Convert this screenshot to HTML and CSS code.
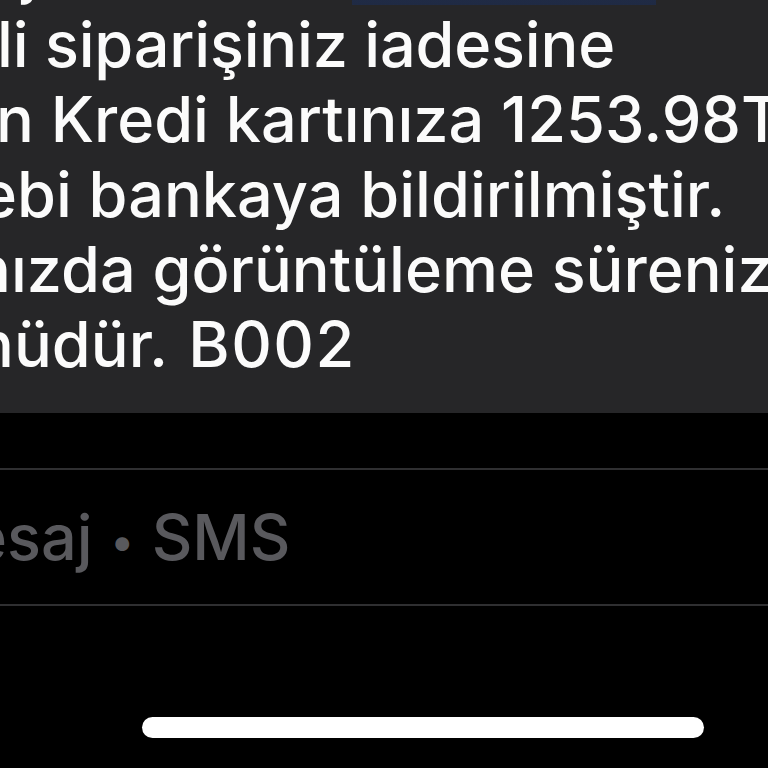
FILE: index.html
```html
<!DOCTYPE html>
<html lang="tr">
<head>
<meta charset="utf-8">
<link rel="stylesheet" href="styles.css">
</head>
<body>
<div class="screen">
  <div class="bubble">
    <div class="ln ln0"><span class="prev">j</span><span class="link"></span></div>
    <div class="ln ln1">li siparişiniz iadesine</div>
    <div class="ln ln2">n Kredi kartınıza 1253.98TL</div>
    <div class="ln ln3">ebi bankaya bildirilmiştir.</div>
    <div class="ln ln4">nızda görüntüleme sürenizi</div>
    <div class="ln ln5">nüdür. <span class="code">B002</span></div>
  </div>
  <div class="meta">
    <div class="rule"></div>
    <div class="kind">esaj <span class="dot">•</span> SMS</div>
    <div class="rule"></div>
  </div>
  <div class="home"><div class="pill"></div></div>
</div>
</body>
</html>
```

FILE: styles.css
```css
html, body {
  margin: 0;
  padding: 0;
  background: #000;
}
.screen {
  width: 768px;
  height: 768px;
  overflow: hidden;
  display: flex;
  flex-direction: column;
  font-family: Inter, "Noto Sans", "Liberation Sans", sans-serif;
}
.bubble {
  background: #262628;
  color: #fbfbfb;
  font-size: 63px;
  font-weight: 500;
  line-height: 75px;
  padding-bottom: 31px;
  overflow: hidden;
}
.ln {
  white-space: nowrap;
  height: 75px;
}
.ln0 {
  margin-top: -68px;
  display: flex;
  align-items: flex-end;
  position: relative;
}
.prev {
  margin-left: 22px;
}
.link {
  position: absolute;
  left: 352px;
  bottom: 2px;
  width: 304px;
  height: 73px;
  background: linear-gradient(#28344f, #1f2a44);
}
.ln1 { text-indent: -3px; letter-spacing: -0.2px; }
.ln2 { text-indent: -4px; }
.ln3 { text-indent: -20px; }
.ln4 { text-indent: -27px; }
.ln5 { text-indent: -24px; }
.code {
  letter-spacing: 1.5px;
  margin-left: 4px;
}
.meta {
  margin-top: 55px;
  display: flex;
  flex-direction: column;
}
.rule {
  height: 2px;
  background: #2f2f31;
}
.kind {
  height: 134px;
  line-height: 134px;
  font-size: 63px;
  font-weight: 500;
  color: #59595d;
  white-space: nowrap;
  text-indent: -30px;
  overflow: hidden;
}
.dot {
  font-size: 44px;
  vertical-align: 3px;
  margin: 0 1px;
}
.home {
  flex: 1;
  padding-top: 111px;
  padding-left: 142px;
}
.pill {
  width: 562px;
  height: 21px;
  border-radius: 11px;
  background: #fff;
}
```
